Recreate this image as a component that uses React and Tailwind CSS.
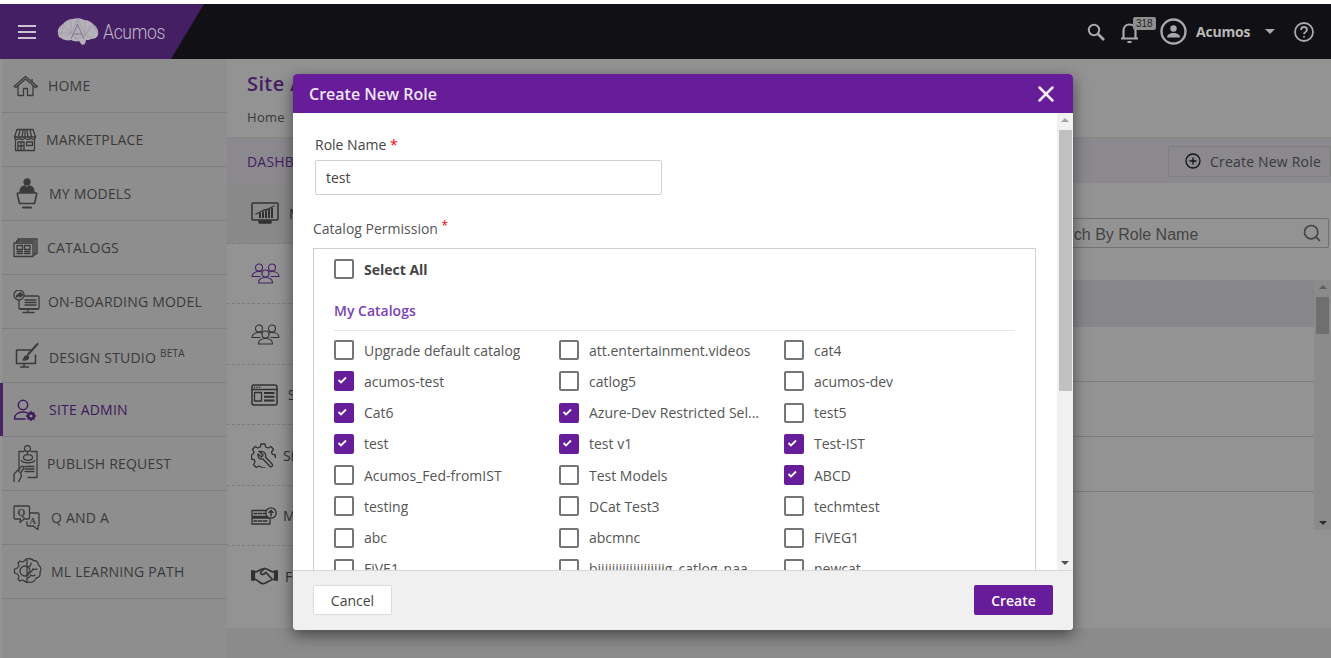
import { Search, X } from "lucide-react";

const openSans = "font-['Open_Sans',sans-serif]";

const Svg = ({ children, w = 28, h = 28, sw = "1.3", className = "" }) => (
  <svg width={w} height={h} viewBox={`0 0 ${w} ${h}`} fill="none" stroke="currentColor" strokeWidth={sw} strokeLinejoin="round" strokeLinecap="round" className={className}>
    {children}
  </svg>
);

const HomeIcon = () => (
  <Svg w={26} h={22}>
    <path d="M1 11.500 12.500 1.500 24.500 11.500 22.500 12.500 12.500 4 3 12.500Z" />
    <path d="M5 11v9.500h5.500v-7h4v7H20V11" />
    <path d="M19 4.500V7" />
  </Svg>
);
const ShopIcon = () => (
  <Svg w={24} h={24}>
    <path d="M4 1.500h16l2.500 7.500h-21Z" />
    <path d="M7 2 5.500 8.500M10 2l-.8 6.500M12 2v6.500M14 2l.8 6.500M17 2l1.500 6.500" />
    <path d="M1.500 9c0 3 4 3 5.200 1 .8 2 4 2 5.300 0 1.300 2 4.500 2 5.300 0 1.200 2 5.200 2 5.200-1" />
    <path d="M2.500 12v10.500h19V12" />
    <path d="M5 22.500V14h6v8.500M5 18h6M8 14v8.500M13.500 14h6v3.500h-6Z" />
  </Svg>
);
const ModelsIcon = () => (
  <Svg w={22} h={32}>
    <circle cx="11" cy="4" r="3" fill="currentColor" />
    <path d="M4 14c0-3.500 2-5.500 5-6l2 2 2-2c3 .5 5 2.500 5 6Z" fill="currentColor" />
    <path d="M1.500 15h19v2l-2 8.500h-15l-2-8.500Z" strokeWidth="1.600" />
    <path d="M7 29.500h8" strokeWidth="2" />
  </Svg>
);
const CatalogIcon = () => (
  <Svg w={25} h={20}>
    <path d="M5 2.500V1h19v14.500h-2M3.500 4.500V3H22v14h-1" />
    <rect x="1" y="5" width="19" height="13.500" />
    <path d="M4 7.500h5.500v4H4ZM11.500 7.500H17v4h-5.500ZM4 13.500h5.500M4 15.500h5.500M11.500 13.500H17M11.500 15.500H17" />
  </Svg>
);
const OnboardIcon = () => (
  <Svg w={27} h={24}>
    <rect x="6" y="6" width="20" height="13" rx="1" />
    <path d="M12 10h11M12 12.500h11M12 15h11M7 19h18M15 19v3M10 22.500h11" />
    <circle cx="6" cy="5" r="5" fill="#f7f7f7" />
    <path d="M3.500 7c.3-2 1.500-3 3.500-3V2.500L9.500 5 7 7V5.500C5.500 5.500 4.500 6 3.500 7Z" fill="currentColor" />
  </Svg>
);
const DesignIcon = () => (
  <Svg w={24} h={25}>
    <path d="M17 7H1.500v13.500h19V12" strokeWidth="1.600" />
    <path d="M9 20.500v2.500M5.500 24h8" strokeWidth="1.600" />
    <path d="M22.500 1 13 11.500" strokeWidth="2" />
    <path d="M8 17c1-.5 1-2.500 2-3.500s3-1 3.500.3-.5 3.200-5.500 3.200Z" fill="currentColor" />
  </Svg>
);
const AdminIcon = () => (
  <Svg w={24} h={22}>
    <circle cx="10" cy="6" r="4.700" strokeWidth="1.500" />
    <path d="M1.500 20c0-4.500 3.500-7 8.500-7 1.500 0 2.500.2 3.500.6M1.500 20H12" strokeWidth="1.500" />
    <circle cx="18" cy="17" r="2.800" strokeWidth="2.400" />
    <path d="M18 12.500v1.500M18 20v1.500M13.500 17H15M21 17h1.500M15 14l1 1M20 19l1 1M21 14l-1 1M16 19l-1 1" strokeWidth="1.600" />
  </Svg>
);
const PublishIcon = () => (
  <Svg w={25} h={37}>
    <path d="M6 27V6.500h5M18 6.500h6v26H15" />
    <circle cx="14.500" cy="3.500" r="3" />
    <path d="M14.500 6.500v3" />
    <ellipse cx="15" cy="12.500" rx="4.500" ry="2.800" />
    <path d="M8.500 15.500c1 3 12 3 13 0M12 21.500h9M12 24h9M12 26.500h9" />
    <path d="M1 37v-8l7.500-7.500c1.500-1 3 .5 2 2L7.500 28l1 3-3 6" strokeWidth="1.400" />
  </Svg>
);
const QaIcon = () => (
  <Svg w={27} h={25}>
    <path d="M2 1h13.500a1 1 0 0 1 1 1v11a1 1 0 0 1-1 1H11l-4 3.500L7.500 14H2a1 1 0 0 1-1-1V2a1 1 0 0 1 1-1Z" />
    <path d="M17 8h8a1 1 0 0 1 1 1v11a1 1 0 0 1-1 1v4l-4.500-4H15a1 1 0 0 1-1-1v-3" />
    <text x="4.500" y="11" fontSize="10" fontWeight="700" fontFamily="Liberation Serif, serif" fill="currentColor" stroke="none">Q</text>
    <text x="16.500" y="18.500" fontSize="9" fontWeight="700" fontFamily="Liberation Serif, serif" fill="currentColor" stroke="none">A</text>
  </Svg>
);
const BrainGearIcon = () => (
  <Svg w={29} h={27}>
    <path d="M12 2.500 9.500 4 7 3 5 5l1 2.500L4.500 10 1.500 11v4l3 1 1.500 2.500L5 21l2 2 2.500-1 2.500 1.500" />
    <circle cx="12" cy="13" r="5" />
    <path d="M12 2c2-2 7-1.500 8.500.5 3 0 5 2 5 4.500 2.500 2 3 5 1.500 7 .5 3-1 5.500-4 6-.5 3-4 5-7 4-2 1-3.500 0-4-1" />
    <path d="M14 2v22M14 9c3 0 4-2 4-4M14 15c3 0 5-1 6-4 2 0 3 1 4 0M14 20c2 0 3-1 4-3 1 1 3 1 4 0" />
  </Svg>
);
const ChartIcon = () => (
  <Svg w={28} h={22}>
    <rect x="1" y="1" width="26" height="17" rx="1" strokeWidth="1.500" />
    <path d="M8 19h12v2H8Z" fill="currentColor" />
    <path d="M5 12 13 8l3-.5 7-3.500" />
    <path d="M9 16v-5M12 16V9.500M15 16V8.500M18 16V7M21 16V6" strokeWidth="2" strokeLinecap="butt" />
  </Svg>
);
const PeopleIcon = () => (
  <Svg w={29} h={21} sw="1.100">
    <circle cx="8" cy="4.500" r="3.500" />
    <circle cx="21" cy="4.500" r="3.500" />
    <path d="M1 13.500c0-3 3-5 7-5 1.500 0 3 .3 4 1M17 9.300c1-.5 2.500-.8 4-.8 4 0 7 2 7 5H20M9 13.500H1" />
    <circle cx="14.500" cy="10.500" r="3.500" fill="#fff" />
    <path d="M7.500 20c0-3.500 3-5.500 7-5.500s7 2 7 5.500Z" fill="#fff" />
  </Svg>
);
const WindowIcon = () => (
  <Svg w={27} h={22}>
    <rect x="1" y="1" width="25" height="20" rx="2" strokeWidth="1.500" />
    <path d="M1 5.500h25" />
    <path d="M3.500 3.200h.1M6 3.200h.1M8.500 3.200h.1" strokeWidth="1.600" />
    <rect x="3.500" y="8.500" width="7" height="8.500" />
    <path d="M13 9h10.500M13 12.800h10.500M13 16.500h10.500" strokeWidth="2" strokeLinecap="butt" />
  </Svg>
);
const GearWrenchIcon = () => (
  <Svg w={26} h={25}>
    <path d="M10 1h4l.7 3 2.300 1 2.700-1.500 2.800 2.800L20.500 9l.8 2.200 3 .8v2.500M10 1l-.7 3L7 5 4.300 3.500 1.500 6.300 3 9l-1 2.200-1.500.8v4l3 .8L4 19l-1.500 2.700 2.800 2.800L8 23l2.300 1 .7 1h3" />
    <path d="M8.500 8.500 12 12l-1.500 2-3.500-3c-.5 3 1.500 6 5 5l7 7.500c1 1 3-.5 2.500-2l-7-7.500c1-3-1.500-6.500-6.500-5.500Z" />
  </Svg>
);
const ServerIcon = () => (
  <Svg w={26} h={18}>
    <path d="M15 3.500H1v6h17M1 11h18v6H1ZM3 6.500h3M7.500 6.500h3M3 14h3M7.500 14h3M12 14h4M12 6.500h3" />
    <circle cx="20" cy="6" r="5.200" fill="#fff" />
    <path d="M20 9V3.500M18 5.500l2-2 2 2" strokeWidth="1.500" />
  </Svg>
);
const HandshakeIcon = () => (
  <Svg w={27} h={18}>
    <path d="M0 4h3.500v9H0ZM23.500 4H27v9h-3.500Z" fill="currentColor" />
    <path d="M3.500 5c4 0 6-3.500 10-3.500 3.500 0 6 3.500 10 3.500M3.500 12c2 .5 3.500 2 5.500 3.500 2 1.500 3.500 1.500 5.500.5 3-1.500 6-3.500 9-4" strokeWidth="1.700" />
    <path d="M13.500 1.500 9.500 5.500c-.5 1.500 2 2.500 3.500 1.500l2-1.500 5.500 6" strokeWidth="1.700" />
  </Svg>
);

const LogoBrain = () => (
  <svg width="42" height="27" viewBox="0 0 42 27" fill="none">
    <path d="M1 15C0 11 3 8 6 6c2-3 6-5 10-5 3-1 8-1 11 1 4 0 8 2 10 5 3 2 5 6 4 10-1 3-4 4-7 4-1 1-3 1-5 1l-1 4-3 1-3-4c-3 1-6 0-8-1-3 1-8 0-10-2-2 0-3-3-3-5Z" fill="#b5b1b8" />
    <path d="M6 6l8 9 7-14 7 16 9-10M1 15l13 0 5 6 9-4 6 3M14 2v13M28 2v15M21 1l-2 20M6 6l-2 12M37 7l4 9M14 15l-6 4M28 17l6-10" stroke="#9a93a3" strokeWidth=".6" />
    <path d="M14 21 20.500 6 27 21M16.500 16h8" stroke="#82758f" strokeWidth="1" />
  </svg>
);

const nav = [
  { label: "Home", icon: HomeIcon, box: "w-[35px]" },
  { label: "Marketplace", icon: ShopIcon, box: "w-[33px]" },
  { label: "My Models", icon: ModelsIcon, box: "w-[36px] pl-[3px]" },
  { label: "Catalogs", icon: CatalogIcon, box: "w-[34px]" },
  { label: "On-Boarding Model", icon: OnboardIcon, box: "w-[35px]" },
  { label: "Design Studio", icon: DesignIcon, box: "w-[36px] pl-[2px]", beta: true },
  { label: "Site Admin", icon: AdminIcon, box: "w-[36px]", active: true },
  { label: "Publish Request", icon: PublishIcon, box: "w-[34px]" },
  { label: "Q and A", icon: QaIcon, box: "w-[38px]" },
  { label: "ML Learning Path", icon: BrainGearIcon, box: "w-[38px]" },
];

const subNav = [
  { label: "Monitoring", icon: ChartIcon, gap: "gap-[10px]", h: "h-[61px]", bg: "bg-[#eeeeee]" },
  { label: "Role Management", icon: PeopleIcon, gap: "gap-[12px]", h: "h-[60px]", active: true },
  { label: "User Management", icon: PeopleIcon, gap: "gap-[12px]", h: "h-[61px]" },
  { label: "Site Content", icon: WindowIcon, gap: "gap-[10px]", h: "h-[60px]" },
  { label: "Site Configuration", icon: GearWrenchIcon, gap: "gap-[6px]", h: "h-[61px]" },
  { label: "Migration", icon: ServerIcon, gap: "gap-[6px]", h: "h-[60px]" },
  { label: "Federation", icon: HandshakeIcon, gap: "gap-[7px]", h: "h-[60px]", last: true },
];

const catalogs = [
  ["Upgrade default catalog", 0], ["att.entertainment.videos", 0], ["cat4", 0],
  ["acumos-test", 1], ["catlog5", 0], ["acumos-dev", 0],
  ["Cat6", 1], ["Azure-Dev Restricted Sel...", 1], ["test5", 0],
  ["test", 1], ["test v1", 1], ["Test-IST", 1],
  ["Acumos_Fed-fromIST", 0], ["Test Models", 0], ["ABCD", 1],
  ["testing", 0], ["DCat Test3", 0], ["techmtest", 0],
  ["abc", 0], ["abcmnc", 0], ["FiVEG1", 0],
  ["FiVE1", 0], ["bijjjjjjjjjjjjjjjjjjg_catlog_naa...", 0], ["newcat", 0],
];

function Checkbox({ checked }) {
  if (checked) {
    return (
      <span className="flex h-[20px] w-[20px] shrink-0 items-center justify-center rounded-[2px] bg-[#671c99]">
        <svg width="20" height="20" viewBox="0 0 20 20" fill="none">
          <path d="M4.500 9 7 11.500 12 6.500" stroke="#fff" strokeWidth="1.800" />
        </svg>
      </span>
    );
  }
  return <span className="h-[20px] w-[20px] shrink-0 rounded-[2px] border-2 border-[#757575] bg-white" />;
}

function ScrollTrack({ className, thumb }) {
  return (
    <div className={`flex shrink-0 flex-col items-center ${className}`}>
      <span className="mt-[5px] h-0 w-0 border-x-[4px] border-b-[4px] border-x-transparent border-b-[#a3a3a3]" />
      <div className={`mt-[8px] w-[13px] ${thumb}`} />
      <span className="mb-[5px] mt-auto h-0 w-0 border-x-[4px] border-t-[4px] border-x-transparent border-t-[#505050]" />
    </div>
  );
}

export default function App() {
  return (
    <div className={`relative h-screen w-full overflow-hidden bg-white ${openSans}`}>
      <div className="h-[4px] bg-white" />

      <header className="flex h-[55px] items-center bg-[#111014]">
        <div className="flex h-full w-[204px] items-center bg-[#451f63] pl-[18px] [clip-path:polygon(0_0,100%_0,171px_100%,0_100%)]">
          <div className="flex w-[18px] flex-col gap-[4px]">
            <span className="h-[2px] bg-[#c9c4cf]" />
            <span className="h-[2px] bg-[#c9c4cf]" />
            <span className="h-[2px] bg-[#c9c4cf]" />
          </div>
          <div className="ml-[21px]"><LogoBrain /></div>
          <span className="ml-[4px] origin-left scale-x-[0.88] font-['Roboto',sans-serif] text-[20px] font-light tracking-[-0.4px] text-[#bdb8c3]">Acumos</span>
        </div>
        <div className="ml-auto flex items-center text-[#a9a9a9]">
          <svg width="18" height="18" viewBox="0 0 18 18" fill="none" stroke="currentColor" className="mr-[15px]">
            <circle cx="7" cy="7" r="5.200" strokeWidth="2" />
            <path d="M11 11l6 6" strokeWidth="2.600" />
          </svg>
          <div className="relative mr-[20px] h-[24px] w-[20px]">
            <svg width="20" height="24" viewBox="0 0 20 24" fill="none" stroke="currentColor" strokeWidth="2.200">
              <path d="M3.500 18V11c0-4 2.500-6.500 6-6.500s6 2.500 6 6.500v7M1 18.500h17M7.500 22h4" />
            </svg>
            <span className="absolute left-[13px] top-[-3px] rounded-[2px] bg-[#8f8f8f] px-[3px] font-['Liberation_Sans',sans-serif] text-[10px] leading-[13px] text-[#222]">318</span>
          </div>
          <svg width="27" height="27" viewBox="0 0 27 27" fill="none" className="mr-[9px]">
            <circle cx="13.500" cy="13.500" r="12" stroke="currentColor" strokeWidth="2.400" />
            <circle cx="13.500" cy="10.500" r="3.200" fill="currentColor" />
            <path d="M7 19.500c0-3 3-4.500 6.500-4.500s6.500 1.500 6.500 4.500Z" fill="currentColor" />
          </svg>
          <span className="mr-[15px] w-[54px] whitespace-nowrap text-[14px] font-bold tracking-[-0.2px] text-[#b9b9b9]">Acumos</span>
          <span className="mr-[19px] h-0 w-0 border-x-[5px] border-t-[5px] border-x-transparent border-t-[#a9a9a9]" />
          <svg width="20" height="20" viewBox="0 0 20 20" fill="none" stroke="currentColor" strokeWidth="1.800" className="mr-[17px]">
            <circle cx="10" cy="10" r="9" />
            <path d="M7 8c0-2 1.300-3 3-3s3 1 3 2.700c0 2-3 2.300-3 4.600" />
            <path d="M10 14v1.500" />
          </svg>
        </div>
      </header>

      <div className="flex h-[599px]">
        <aside className="w-[227px] shrink-0 bg-white pl-[2px]">
          <div className="h-full bg-[#f7f7f7]">
            {nav.map(({ label, icon: Icon, box, beta, active }) => (
              <div key={label} className={`relative flex h-[54px] items-center border-b border-[#dbdbdb] pl-[11px] ${active ? "text-[#6b2fa0]" : "text-[#666]"}`}>
                {active && <span className="absolute bottom-0 left-[-2px] top-0 w-[3px] bg-[#7b3bb0]" />}
                <span className={`flex shrink-0 items-center ${box} ${active ? "text-[#6b2fa0]" : "text-[#666]"}`}><Icon /></span>
                <span className={`whitespace-nowrap text-[14px] uppercase tracking-[0.2px] ${beta ? "pt-[4px]" : ""}`}>
                  {label}
                  {beta && <sup className="top-[-6px] ml-[4px] text-[10px]">BETA</sup>}
                </span>
              </div>
            ))}
          </div>
        </aside>

        <main className="min-w-0 flex-1 bg-white">
          <div className="h-[80px] border-b-2 border-[#ececec] pl-[20px] pt-[10px]">
            <h1 className="text-[20px] font-semibold leading-[30px] tracking-[0.4px] text-[#7a37ad]">Site Admin</h1>
            <p className="mt-[9px] text-[13px] tracking-[0.3px] text-[#666]"><span className="mr-[4px]">Home</span> / Site Admin</p>
          </div>
          <div className="flex h-[44px] items-center justify-between bg-[#f1eef6] pl-[20px]">
            <span className="text-[14px] tracking-[0.2px] text-[#7a37ad]">DASHBOARD</span>
            <button className="flex h-[31px] w-[163px] items-center gap-[9px] whitespace-nowrap rounded-[2px] border border-[#dcdcdc] pl-[16px] text-[14px] tracking-[0.2px] text-[#666]">
              <svg width="16" height="16" viewBox="0 0 16 16" fill="none" stroke="#222" strokeWidth="1.300">
                <circle cx="8" cy="8" r="7" />
                <path d="M8 4.500v7M4.500 8h7" />
              </svg>
              Create New Role
            </button>
          </div>
          <div className="flex h-[445px]">
            <nav className="w-[300px] shrink-0">
              {subNav.map(({ label, icon: Icon, gap, h, bg, active, last }) => (
                <div key={label} className={`flex items-center pl-[24px] ${gap} ${h} ${bg || ""} ${last ? "" : "border-b border-dashed border-[#d8d8d8]"} ${active ? "text-[#7a37ad]" : "text-[#555]"}`}>
                  <Icon />
                  <span className="whitespace-nowrap text-[14px]">{label}</span>
                </div>
              ))}
            </nav>
            <div className="min-w-0 flex-1">
              <div className="flex justify-end pr-[2px] pt-[35px]">
                <div className="flex h-[30px] w-[300px] items-center justify-between rounded-[2px] border border-[#c6c6c6] pl-[10px] pr-[6px] font-['Liberation_Sans',sans-serif] text-[16px] text-[#777]">
                  <span className="pt-[3px]">Search By Role Name</span>
                  <Search size={20} strokeWidth={2} className="text-[#777]" />
                </div>
              </div>
              <div className="mt-[32px] flex h-[250px]">
                <div className="min-w-0 flex-1">
                  <div className="h-[47px] bg-[#ebe8f0]" />
                  <div className="h-[55px] border-b border-[#d8d8d8]" />
                  <div className="h-[55px] border-b border-[#d8d8d8]" />
                  <div className="h-[55px] border-b border-[#d8d8d8]" />
                </div>
                <ScrollTrack className="w-[17px] bg-[#f1f1f1]" thumb="h-[37px] bg-[#c1c1c1]" />
              </div>
            </div>
          </div>
          <div className="h-[30px] bg-[#f2f2f2]" />
        </main>
      </div>

      {/* backdrop, header stays out of it */}
      <div className="absolute inset-x-0 bottom-0 top-[59px] bg-black/[0.425]" />

      <section className="absolute left-[293px] top-[74px] flex h-[556px] w-[780px] flex-col overflow-hidden rounded-[4px] bg-white shadow-[0_5px_15px_rgba(0,0,0,0.5)]">
        <div className="flex h-[39px] shrink-0 items-center justify-between bg-[#671c99] pl-[16px] pr-[14px]">
          <h2 className="text-[16px] font-semibold text-[#eee6f3]">Create New Role</h2>
          <X size={26} strokeWidth={2.300} className="text-[#f3edf7]" />
        </div>

        <div className="flex min-h-0 flex-1">
          <div className="min-w-0 flex-1 overflow-hidden pl-[20px] pr-[21px] pt-[22px]">
            <label className="ml-[2px] block text-[14px] leading-[20px] text-[#444]">
              Role Name <span className="text-[#f00]">*</span>
            </label>
            <div className="ml-[2px] mt-[5px] flex h-[35px] w-[347px] items-center rounded-[2px] border border-[#d0d0d0] pl-[10px] text-[14px] text-[#444]">test</div>
            <div className="mt-[24px] text-[14px] leading-[20px] text-[#555]">
              Catalog Permission <sup className="top-[-4px] text-[12px] text-[#f00]">*</sup>
            </div>
            <div className="mt-[9px] border border-[#d0d0d0] px-[20px] pb-[20px] pt-[10px]">
              <div className="flex h-[20px] items-center gap-[10px]">
                <Checkbox />
                <span className="text-[14px] font-bold text-[#444]">Select All</span>
              </div>
              <div className="mt-[22px] border-b border-[#e6e6e6] pb-[9px] text-[14px] font-semibold leading-[20px] text-[#7c3fb5]">My Catalogs</div>
              <div className="mt-[9px] grid grid-cols-[225px_225px_225px] gap-y-[11.250px]">
                {catalogs.map(([name, checked], i) => (
                  <div key={i} className="flex h-[20px] items-center gap-[10px]">
                    <Checkbox checked={!!checked} />
                    <span className="truncate text-[14px] text-[#555]">{name}</span>
                  </div>
                ))}
              </div>
            </div>
          </div>
          <ScrollTrack className="w-[16px] bg-[#f1f1f1]" thumb="h-[261px] bg-[#c1c1c1]" />
        </div>

        <div className="flex h-[60px] shrink-0 items-center justify-between border-t border-[#d8d8d8] bg-[#f0f0f0] px-[20px] pb-[1px]">
          <button className="h-[30px] w-[79px] rounded-[2px] border border-[#dcdcdc] bg-white text-[14px] text-[#444]">Cancel</button>
          <button className="h-[30px] w-[79px] rounded-[2px] bg-[#671c99] text-[14px] font-semibold text-white">Create</button>
        </div>
      </section>
    </div>
  );
}
